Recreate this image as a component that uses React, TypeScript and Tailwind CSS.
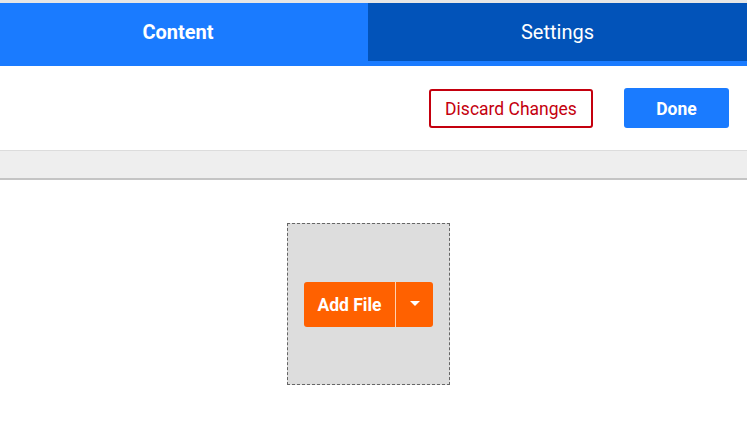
import React from 'react';

export default function App() {
  return (
    <div className="w-[747px] h-[443px] bg-white overflow-hidden" style={{ fontFamily: 'Roboto, "Liberation Sans", sans-serif' }}>
      <div className="h-[3px] bg-[#e6e6e6]" />
      <div className="h-[63px] bg-[#1a7bff] flex items-start">
        <div className="w-[368px] h-[58px] pr-[12px] flex items-center justify-center text-white text-[20px] font-bold">Content</div>
        <div className="flex-1 h-[58px] bg-[#0253b9] flex items-center justify-center text-white text-[20px]">Settings</div>
      </div>
      <div className="h-[84px] flex items-center justify-end pr-[18px] gap-[31px]">
        <button className="w-[164px] h-[39px] pt-[3px] border-2 border-[#c4000e] rounded-[3px] text-[#c4000e] text-[17.5px] leading-none">Discard Changes</button>
        <button className="w-[105px] h-[40px] pt-[3px] bg-[#1a7bff] rounded-[3px] text-white text-[17.5px] font-bold leading-none">Done</button>
      </div>
      <div className="h-[30px] bg-[#eeeeee] border-t border-t-[#dcdcdc] border-b-2 border-b-[#c4c4c4]" />
      <div className="flex justify-center pt-[43px] pr-[10px]">
        <div className="w-[163px] h-[162px] border border-dashed border-[#666] bg-[#dddddd] flex items-center justify-center">
          <div className="flex h-[45px] bg-[#ff6100] rounded-[3px] text-white">
            <div className="w-[91px] pt-[2px] flex items-center justify-center text-[17.5px] font-bold">Add File</div>
            <div className="w-px bg-[#ffd0b0]" />
            <div className="w-[37px] flex items-center justify-center">
              <svg width="10" height="6" viewBox="0 0 10 6"><path d="M0 0h10L5 5z" fill="white" /></svg>
            </div>
          </div>
        </div>
      </div>
    </div>
  );
}
